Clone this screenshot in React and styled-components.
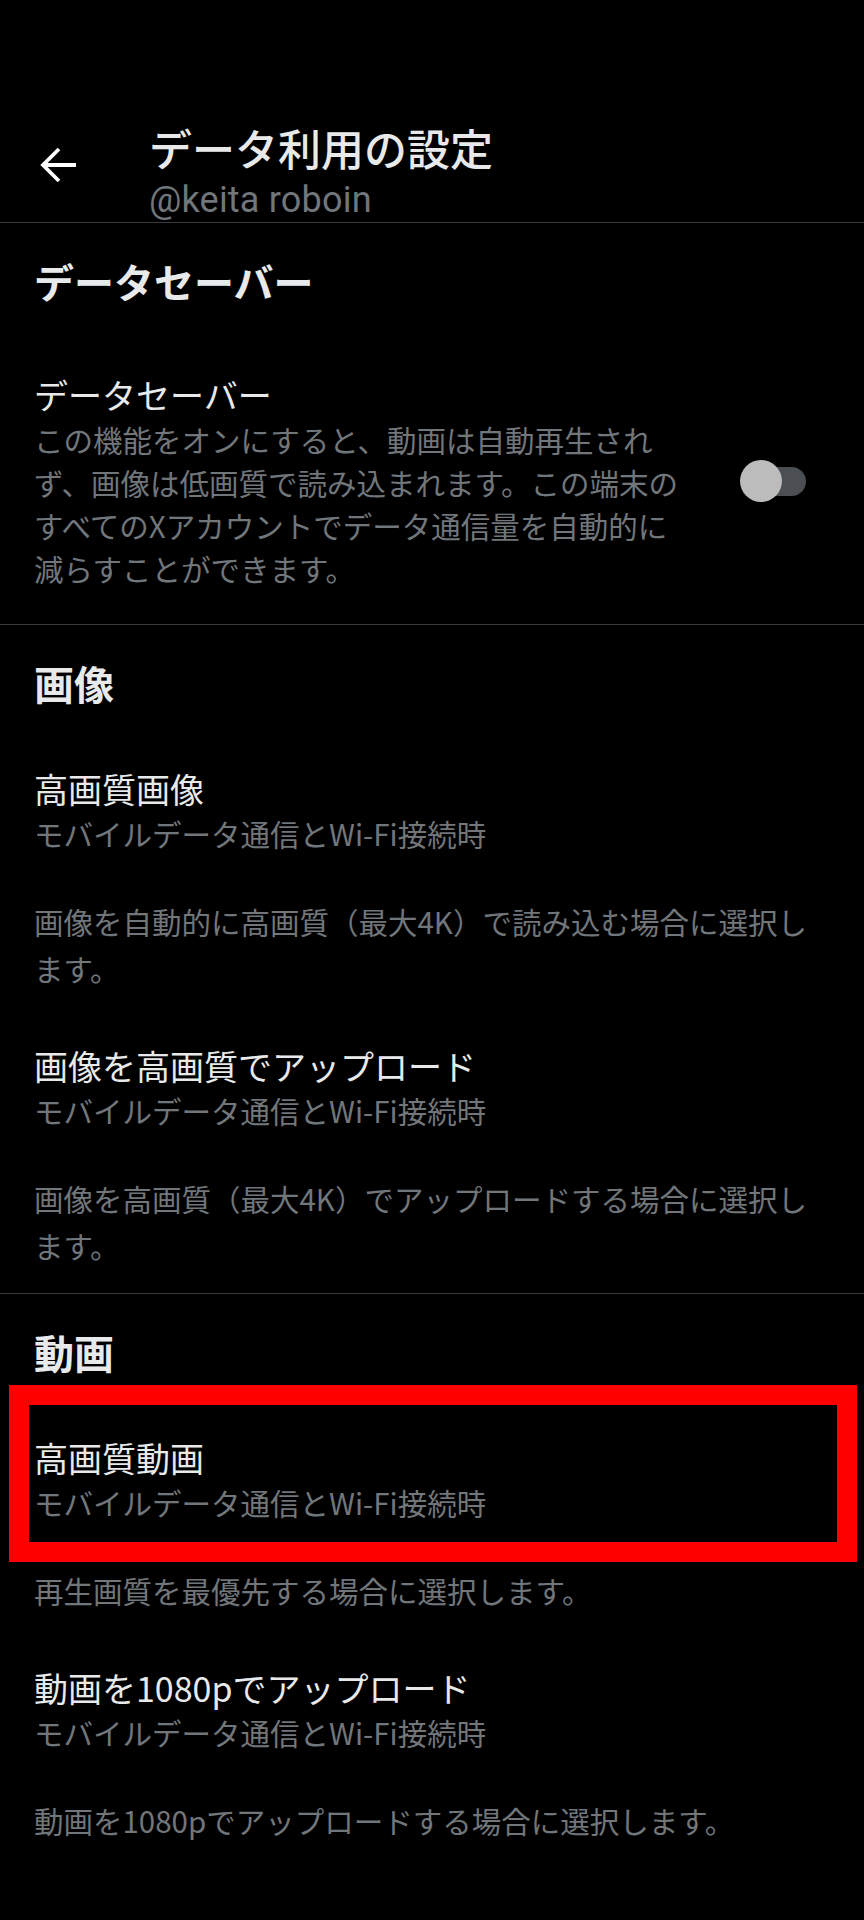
import React from "react";
import styled, { createGlobalStyle } from "styled-components";

const GlobalStyle = createGlobalStyle`
  html, body {
    margin: 0;
    padding: 0;
    background: #000;
  }
  body {
    font-family: "Noto Sans CJK JP", "Noto Sans", sans-serif;
    color: #e7e9ea;
  }
`;

const Page = styled.div`
  min-height: 1920px;
  background: #000;
`;

const TopBar = styled.header`
  display: flex;
  align-items: flex-start;
  padding: 121px 34px 0 35px;
  border-bottom: 1px solid #3a3b3d;
`;

const BackButton = styled.div`
  width: 48px;
  height: 48px;
  margin-top: 20px;
  margin-right: 66px;
  color: #fff;
  svg {
    display: block;
  }
`;

const TitleBlock = styled.div`
  display: flex;
  flex-direction: column;
`;

const Title = styled.h1`
  margin: 0;
  font-size: 43px;
  font-weight: 500;
  line-height: 52px;
  color: #e7e9ea;
`;

const Handle = styled.div`
  padding-top: 5px;
  font-family: Roboto, "Noto Sans", sans-serif;
  font-size: 36px;
  line-height: 44px;
  letter-spacing: 0.2px;
  color: #71767b;
`;

const Section = styled.section`
  border-bottom: ${(p) => (p.$last ? "none" : "1px solid #3a3b3d")};
`;

const SectionHeading = styled.h2`
  margin: 0;
  padding: 30px 34px 28px;
  font-size: 40px;
  font-weight: 700;
  line-height: 56px;
  color: #e7e9ea;
`;

const SwitchRow = styled.div`
  display: flex;
  align-items: center;
  padding: 35px 58px 34px 34px;
`;

const SwitchText = styled.div`
  flex: 0 1 656px;
`;

const Switch = styled.span`
  position: relative;
  flex: none;
  margin-left: auto;
  width: 66px;
  height: 42px;
`;

const Track = styled.span`
  position: absolute;
  right: 0;
  top: 7px;
  width: 54px;
  height: 29px;
  border-radius: 15px;
  background: #4b4f53;
`;

const Knob = styled.span`
  position: absolute;
  left: 0;
  top: 0;
  width: 42px;
  height: 42px;
  border-radius: 50%;
  background: #bcbcbc;
`;

const Item = styled.div`
  padding: 27px 34px 24px;
`;

const Labels = styled.div`
  position: relative;
`;

const Highlight = styled.div`
  position: absolute;
  top: -50px;
  bottom: -39px;
  left: -25px;
  right: -27px;
  border: 20px solid #ff0000;
  pointer-events: none;
`;

const ItemTitle = styled.div`
  font-size: 34px;
  line-height: 46px;
  color: #e7e9ea;
`;

const ItemSub = styled.div`
  font-size: 29.5px;
  line-height: 42px;
  color: #71767b;
`;

const ItemDesc = styled.p`
  margin: ${(p) => (p.$tight ? "0" : "44px 0 0")};
  font-size: 29.5px;
  line-height: ${(p) => (p.$tight ? "43px" : "47px")};
  color: #71767b;
`;

const BackArrow = () => (
  <svg width="48" height="48" viewBox="0 0 48 48" fill="none">
    <path
      d="M9 24H41M24 8L8 24L24 40"
      stroke="currentColor"
      strokeWidth="3.8"
      strokeLinecap="butt"
      strokeLinejoin="miter"
    />
  </svg>
);

const MOBILE_AND_WIFI = "モバイルデータ通信とWi-Fi接続時";

const SettingItem = ({ title, sub, desc, highlighted }) => (
  <Item>
    <Labels>
      <ItemTitle>{title}</ItemTitle>
      <ItemSub>{sub}</ItemSub>
      {highlighted && <Highlight />}
    </Labels>
    <ItemDesc>{desc}</ItemDesc>
  </Item>
);

export default function App() {
  return (
    <Page lang="ja">
      <GlobalStyle />
      <TopBar>
        <BackButton>
          <BackArrow />
        </BackButton>
        <TitleBlock>
          <Title>データ利用の設定</Title>
          <Handle>@keita roboin</Handle>
        </TitleBlock>
      </TopBar>

      <Section>
        <SectionHeading>データセーバー</SectionHeading>
        <SwitchRow>
          <SwitchText>
            <ItemTitle>データセーバー</ItemTitle>
            <ItemDesc $tight>
              この機能をオンにすると、動画は自動再生されず、画像は低画質で読み込まれます。この端末のすべてのXアカウントでデータ通信量を自動的に減らすことができます。
            </ItemDesc>
          </SwitchText>
          <Switch>
            <Track />
            <Knob />
          </Switch>
        </SwitchRow>
      </Section>

      <Section>
        <SectionHeading>画像</SectionHeading>
        <SettingItem
          title="高画質画像"
          sub={MOBILE_AND_WIFI}
          desc="画像を自動的に高画質（最大4K）で読み込む場合に選択します。"
        />
        <SettingItem
          title="画像を高画質でアップロード"
          sub={MOBILE_AND_WIFI}
          desc="画像を高画質（最大4K）でアップロードする場合に選択します。"
        />
      </Section>

      <Section $last>
        <SectionHeading>動画</SectionHeading>
        <SettingItem
          title="高画質動画"
          sub={MOBILE_AND_WIFI}
          desc="再生画質を最優先する場合に選択します。"
          highlighted
        />
        <SettingItem
          title="動画を1080pでアップロード"
          sub={MOBILE_AND_WIFI}
          desc="動画を1080pでアップロードする場合に選択します。"
        />
      </Section>
    </Page>
  );
}
